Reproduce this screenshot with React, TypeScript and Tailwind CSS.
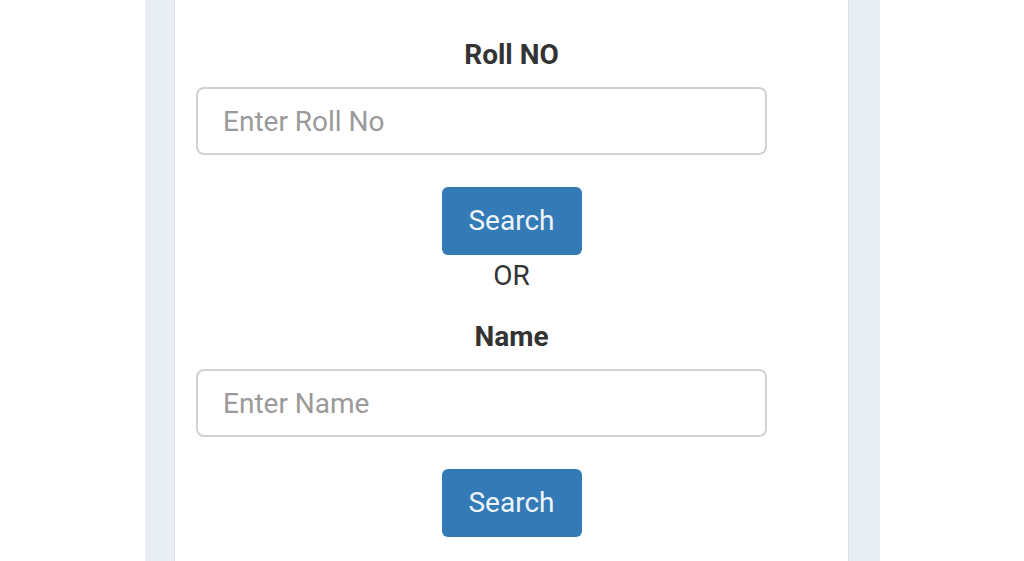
const Field = ({ label, placeholder }: { label: string; placeholder: string }) => {
  return (
    <div className="flex flex-col items-center">
      <label className="text-center text-[28px] leading-[30px] font-bold text-[#333333]">{label}</label>
      <input
        type="text"
        placeholder={placeholder}
        className="mt-[17px] h-[68px] w-[571px] self-start rounded-[8px] border-2 border-[#d2d2d2] bg-white px-[25px] text-[28px] text-[#333333] placeholder:text-[#9a9a9a] outline-none"
      />
      <button className="mt-[32px] h-[68px] w-[140px] rounded-[6px] bg-[#337ab7] text-[28px] text-[#eef4fa]">
        Search
      </button>
    </div>
  );
};

export default function App() {
  return (
    <div className="h-[561px] w-[1024px] overflow-hidden bg-white font-['Roboto',sans-serif]">
      <div className="ml-[145px] flex h-full w-[735px] bg-[#e9edf4] pl-[29px] pr-[31px]">
        <div className="h-full flex-1 border-x border-[#dde2ea] bg-white px-[21px] pt-[40px]">
          <Field label="Roll NO" placeholder="Enter Roll No" />
          <p className="mt-[6px] text-center text-[28px] leading-[30px] text-[#333333]">OR</p>
          <div className="mt-[31px]">
            <Field label="Name" placeholder="Enter Name" />
          </div>
        </div>
      </div>
    </div>
  );
}
